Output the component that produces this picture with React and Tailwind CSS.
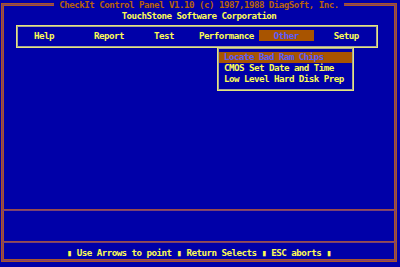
import React from 'react';

const menu = [
    { label: 'Help', ml: 'ml-[17px]' },
    { label: 'Report', ml: 'ml-[40px]' },
    { label: 'Test', ml: 'ml-[30px]' },
    { label: 'Performance', ml: 'ml-[25px]' },
];

const otherItems = ['Locate Bad Ram Chips', 'CMOS Set Date and Time', 'Low Level Hard Disk Prep'];

export default function App() {
    return (
        <div className="w-[400px] h-[267px] bg-[#0000a8] pt-[3px] pl-[1px] overflow-hidden font-['DejaVu_Sans_Mono',monospace] font-bold text-[9.2px] tracking-[-0.54px] leading-[10.68px] whitespace-pre">
            {/* outer double frame */}
            <div className="relative w-[396px] h-[259px] border border-[#a8542a] shadow-[inset_0_0_0_1px_#84426a,inset_0_0_0_2px_#a8542a] flex flex-col">
                <div className="absolute -top-[4px] left-0 right-0 flex justify-center">
                    <span className="bg-[#0000a8] px-[5px] h-[10.68px] text-[#b8620a]">CheckIt Control Panel V1.10 (c) 1987,1988 DiagSoft, Inc.</span>
                </div>

                <div className="mt-[6.68px] h-[10.68px] text-center text-[#fcfc54]">TouchStone Software Corporation</div>

                {/* menu bar */}
                <div className="mt-[3.64px] ml-[14px] w-[362px] h-[23px] border border-[#e4e47c] shadow-[inset_0_0_0_1px_#a8a898] pt-[4.3px] flex text-[#fcfc54]">
                    {menu.map((m) => (
                        <span key={m.label} className={`${m.ml} h-[10.68px] pt-[1px]`}>{m.label}</span>
                    ))}
                    <span className="ml-[5px] w-[55px] h-[10.68px] pt-[1px] bg-[#a85400] text-[#5a5afc] text-center">Other</span>
                    <span className="ml-[20px] h-[10.68px] pt-[1px]">Setup</span>
                </div>

                {/* Other dropdown */}
                <div className="absolute left-[215px] top-[43px] w-[137px] h-[43.5px] bg-[#0000a8] border border-[#e4e47c] shadow-[inset_0_0_0_1px_#a8a898] pt-[4.4px] px-[1px]">
                    {otherItems.map((item, i) => (
                        <div
                            key={item}
                            className={`h-[10.68px] pl-[5px] ${i === 0 ? 'bg-[#a85400] text-[#5a5afc]' : 'text-[#fcfc54]'}`}
                        >
                            {item}
                        </div>
                    ))}
                </div>

                <div className="flex-1" />

                <div className="h-[2px] border-t border-b border-t-[#9a4c46] border-b-[#7a4274]" />
                <div className="h-[30px]" />
                <div className="h-[2px] border-t border-b border-t-[#9a4c46] border-b-[#7a4274]" />

                {/* status line */}
                <div className="pt-[4.6px] h-[18px] text-center text-[#fcfc54]">
                    ▮ Use Arrows to point ▮ Return Selects ▮ ESC aborts ▮
                </div>
            </div>
        </div>
    );
}
